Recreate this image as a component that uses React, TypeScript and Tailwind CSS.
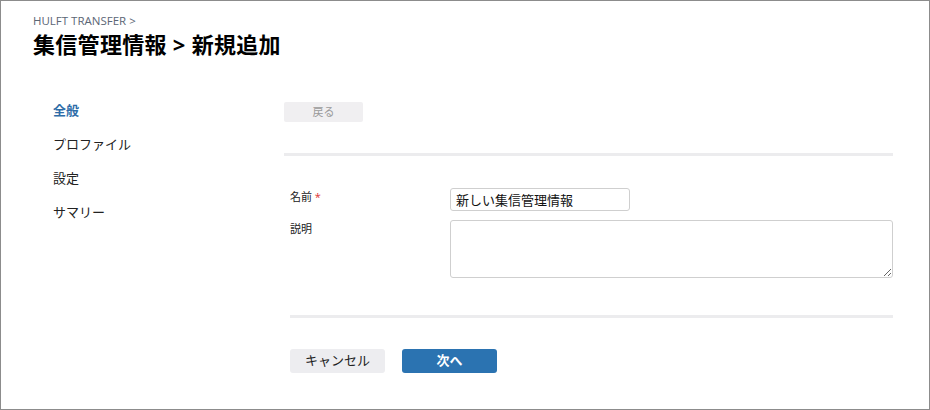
import React from "react";

const font = { fontFamily: '"Open Sans", "Noto Sans CJK JP", sans-serif' };

export default function App() {
  const nav = ["全般", "プロファイル", "設定", "サマリー"];
  return (
    <div
      className="w-[930px] h-[410px] border border-[#8c8c8c] bg-white text-[#222] overflow-hidden"
      style={{ fontFamily: '"Open Sans", "Noto Sans CJK JP", sans-serif' }}
    >
      <div className="pl-[32px] pt-[13px]">
        <div className="text-[11.5px] leading-[14px] text-[#5b6675]">HULFT TRANSFER &gt;</div>
        <h1 className="mt-[2px] text-[22px] leading-[29px] font-bold text-black tracking-[0.3px]">
          集信管理情報 &gt; 新規追加
        </h1>
      </div>
      <div className="flex pl-[52px] pt-[35px]">
        <nav className="w-[231px] flex flex-col">
          {nav.map((n, i) => (
            <div
              key={n}
              className={
                "h-[34px] flex items-center text-[13px] " +
                (i === 0 ? "text-[#2d6ca8] font-bold" : "text-[#222]")
              }
            >
              {n}
            </div>
          ))}
        </nav>
        <main className="w-[609px] flex flex-col pt-[8px]">
          <button className="w-[79px] h-[20px] bg-[#f0eff1] text-[#9a9a9a] text-[11px] leading-[20px] rounded-[2px]">
            戻る
          </button>
          <div className="mt-[31px] h-[3px] bg-[#ececee]" />
          <div className="mt-[32px] flex">
            <div className="w-[160px] ml-[6px] text-[11px] leading-[14px] pt-[2px]">
              名前 <span className="text-[#d33]">*</span>
            </div>
            <input
              className="w-[180px] h-[23px] border border-[#cfcfcf] rounded-[3px] px-[5px] text-[13px] text-[#111] outline-none"
              style={font}
              defaultValue="新しい集信管理情報"
            />
          </div>
          <div className="mt-[9px] flex">
            <div className="w-[160px] ml-[6px] text-[11px] leading-[14px] pt-[2px]">説明</div>
            <textarea className="w-[443px] h-[58px] border border-[#cfcfcf] rounded-[3px] outline-none" />
          </div>
          <div className="mt-[37px] ml-[6px] h-[3px] bg-[#ececee]" />
          <div className="mt-[31px] ml-[6px] flex gap-[17px]">
            <button className="w-[95px] h-[24px] bg-[#ededf0] rounded-[3px] text-[13px] text-[#222]">
              キャンセル
            </button>
            <button className="w-[95px] h-[24px] bg-[#2b73b1] rounded-[3px] text-[13px] text-white font-bold">
              次へ
            </button>
          </div>
        </main>
      </div>
    </div>
  );
}
